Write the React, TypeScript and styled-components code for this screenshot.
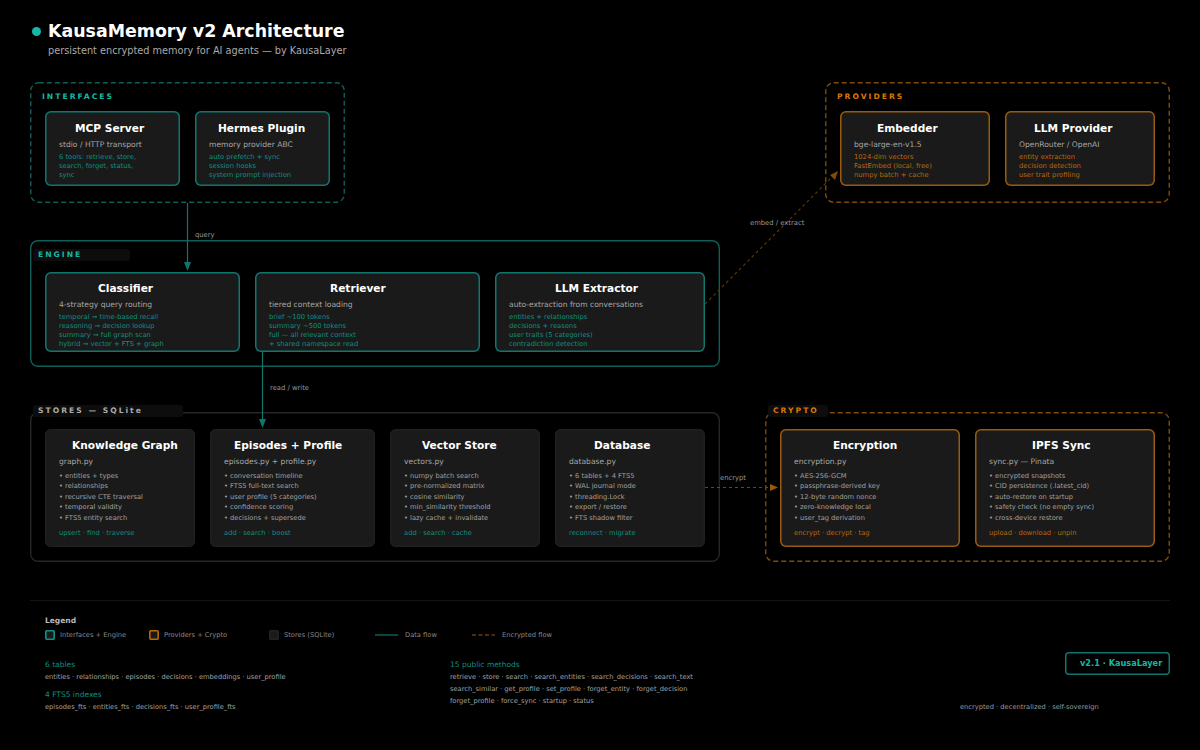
import styled, { createGlobalStyle } from "styled-components";

const TEAL = "#14b8a6";
const TEAL_DIM = "#0f766e";
const TEAL_FRAME = "#0d5f58";
const ORANGE = "#d97706";
const ORANGE_DIM = "#9a5a0e";
const ORANGE_FRAME = "#7f4a0a";

type Tone = "teal" | "orange" | "plain";

const GlobalStyle = createGlobalStyle`
  html, body {
    margin: 0;
    background: #000;
    font-family: "DejaVu Sans", sans-serif;
  }
`;

const Page = styled.div`
  position: relative;
  width: 1200px;
  height: 750px;
  overflow: hidden;
  padding: 0 30px;
  box-sizing: border-box;
  background: #000;
`;

const Header = styled.div`
  height: 82px;
  padding: 19px 0 0 18px;
  box-sizing: border-box;
  position: relative;
`;
const Dot = styled.div`
  position: absolute;
  left: 2px;
  top: 27px;
  width: 9px;
  height: 9px;
  border-radius: 50%;
  background: ${TEAL};
`;
const Title = styled.div`
  font-size: 17.4px;
  line-height: 24px;
  font-weight: 700;
  color: #fff;
`;
const Subtitle = styled.div`
  font-size: 9.75px;
  line-height: 14px;
  margin-top: 1px;
  color: #aaa;
`;

const Row = styled.div<{ $top?: number }>`
  display: flex;
  justify-content: space-between;
  margin-top: ${(p) => p.$top ?? 0}px;
`;

const Group = styled.div<{ $w: number; $h: number; $pad: number; $border?: string }>`
  position: relative;
  width: ${(p) => p.$w}px;
  height: ${(p) => p.$h}px;
  box-sizing: border-box;
  padding: ${(p) => p.$pad}px 15px 0;
  display: flex;
  gap: 15px;
  border-radius: 8px;
  box-shadow: ${(p) => (p.$border ? `inset 0 0 0 1.4px ${p.$border}` : "none")};
`;
const Frame = styled.svg`
  position: absolute;
  left: 0;
  top: 0;
  pointer-events: none;
`;
const GroupLabel = styled.div<{ $tone: Tone; $left: number; $top: number; $chip?: number }>`
  position: absolute;
  left: ${(p) => p.$left}px;
  top: ${(p) => p.$top}px;
  width: ${(p) => (p.$chip ? `${p.$chip}px` : "auto")};
  height: 12px;
  box-sizing: border-box;
  padding-left: 5px;
  border-radius: 3px;
  background: ${(p) => (p.$chip ? "#0d0d0d" : "transparent")};
  font-size: 7.6px;
  line-height: 12px;
  font-weight: 700;
  letter-spacing: 2.02px;
  white-space: nowrap;
  color: ${(p) => (p.$tone === "teal" ? TEAL : p.$tone === "orange" ? ORANGE : "#aaa")};
`;

const Card = styled.div<{ $w: number; $h: number; $tone: Tone; $pt: number }>`
  width: ${(p) => p.$w}px;
  height: ${(p) => p.$h}px;
  flex: none;
  box-sizing: border-box;
  padding: ${(p) => p.$pt}px 0 0 14px;
  background: #1a1a1a;
  border-radius: 6px;
  box-shadow: inset 0 0 0 1.5px
    ${(p) => (p.$tone === "teal" ? TEAL_DIM : p.$tone === "orange" ? ORANGE_DIM : "#1f1f1f")};
`;
const CardTitle = styled.div<{ $indent: number }>`
  margin-left: ${(p) => p.$indent - 14}px;
  font-size: 10.6px;
  line-height: 14px;
  font-weight: 700;
  color: #fff;
  white-space: nowrap;
`;
const CardSub = styled.div`
  margin-top: 4px;
  font-size: 7.6px;
  line-height: 12px;
  color: #a6a6a6;
  white-space: nowrap;
`;
const Details = styled.div<{ $tone: Tone }>`
  margin-top: 2px;
  font-size: 6.75px;
  line-height: 9px;
  white-space: nowrap;
  color: ${(p) => (p.$tone === "teal" ? "#0f8f80" : "#b8690a")};
`;
const Bullets = styled.ul`
  list-style: none;
  margin: 2.75px 0 0;
  padding: 0;
  font-size: 6.7px;
  line-height: 10.5px;
  color: #a0a0a0;
  white-space: nowrap;
`;
const Methods = styled.div<{ $tone: Tone }>`
  margin-top: 4.75px;
  font-size: 6.75px;
  line-height: 10px;
  white-space: nowrap;
  color: ${(p) => (p.$tone === "orange" ? "#b8690a" : "#0f8f80")};
`;

const FlowLabel = styled.text`
  font-family: "DejaVu Sans", sans-serif;
  font-size: 6.8px;
  fill: #999;
`;

const Footer = styled.div`
  margin-top: 38px;
  border-top: 1px solid #141414;
  padding: 14px 0 0 15px;
`;
const LegendTitle = styled.div`
  font-size: 7.5px;
  line-height: 12px;
  font-weight: 700;
  color: #bbb;
`;
const LegendRow = styled.div`
  display: flex;
  margin-top: 2px;
  height: 12px;
`;
const LegendItem = styled.div<{ $w: number }>`
  width: ${(p) => p.$w}px;
  display: flex;
  align-items: center;
  font-size: 6.7px;
  color: #888;
  white-space: nowrap;
`;
const Swatch = styled.span<{ $color: string }>`
  width: 10px;
  height: 10px;
  margin-right: 5px;
  border-radius: 2px;
  background: #1a1a1a;
  box-shadow: inset 0 0 0 1.6px ${(p) => p.$color};
`;
const LegendLine = styled.svg`
  width: 23px;
  height: 2px;
  margin-right: 7px;
`;

const Stats = styled.div`
  display: grid;
  grid-template-columns: 405px 510px 1fr;
  margin-top: 18px;
`;
const StatHead = styled.div<{ $top?: number }>`
  margin-top: ${(p) => p.$top ?? 0}px;
  font-size: 7.5px;
  line-height: 12px;
  color: #0f8f80;
`;
const StatLine = styled.div`
  font-size: 6.7px;
  line-height: 12px;
  color: #a0a0a0;
  white-space: nowrap;
`;
const Side = styled.div`
  display: flex;
  flex-direction: column;
  margin-top: -7px;
`;
const Badge = styled.div`
  align-self: flex-end;
  width: 105px;
  height: 23px;
  box-sizing: border-box;
  padding-left: 15px;
  border-radius: 4px;
  box-shadow: inset 0 0 0 1.5px ${TEAL_DIM};
  font-size: 8.2px;
  line-height: 23px;
  font-weight: 700;
  color: ${TEAL};
  white-space: nowrap;
`;
const SideNote = styled.div`
  margin-top: 26px;
  font-size: 6.7px;
  line-height: 12px;
  color: #999;
  white-space: nowrap;
`;

const Connectors = styled.svg`
  position: absolute;
  left: 0;
  top: 0;
  pointer-events: none;
`;

const DashedFrame = ({ w, h, color }: { w: number; h: number; color: string }) => (
  <Frame width={w} height={h}>
    <rect
      x={0.75}
      y={0.75}
      width={w - 1.5}
      height={h - 1.5}
      rx={8}
      fill="none"
      stroke={color}
      strokeWidth={1.4}
      strokeDasharray="5 3"
    />
  </Frame>
);

type BoxProps = {
  w: number;
  h: number;
  tone: Tone;
  indent: number;
  title: string;
  sub: string;
  lines: string[];
  pt?: number;
};

const SmallBox = ({ w, h, tone, indent, title, sub, lines, pt = 10 }: BoxProps) => (
  <Card $w={w} $h={h} $tone={tone} $pt={pt}>
    <CardTitle $indent={indent}>{title}</CardTitle>
    <CardSub>{sub}</CardSub>
    <Details $tone={tone}>
      {lines.map((l) => (
        <div key={l}>{l}</div>
      ))}
    </Details>
  </Card>
);

const StoreBox = ({ w, h, tone, indent, title, sub, lines, methods }: BoxProps & { methods: string }) => (
  <Card $w={w} $h={h} $tone={tone} $pt={9}>
    <CardTitle $indent={indent}>{title}</CardTitle>
    <CardSub>{sub}</CardSub>
    <Bullets>
      {lines.map((l) => (
        <li key={l}>• {l}</li>
      ))}
    </Bullets>
    <Methods $tone={tone}>{methods}</Methods>
  </Card>
);

export default function App() {
  return (
    <Page>
      <GlobalStyle />
      <Header>
        <Dot />
        <Title>KausaMemory v2 Architecture</Title>
        <Subtitle>persistent encrypted memory for AI agents — by KausaLayer</Subtitle>
      </Header>

      <Row>
        <Group $w={315} $h={121} $pad={29}>
          <DashedFrame w={315} h={121} color={TEAL_FRAME} />
          <GroupLabel $tone="teal" $left={7} $top={9}>INTERFACES</GroupLabel>
          <SmallBox w={135} h={75} tone="teal" indent={30} title="MCP Server" sub="stdio / HTTP transport"
            lines={["6 tools: retrieve, store,", "search, forget, status,", "sync"]} />
          <SmallBox w={135} h={75} tone="teal" indent={23} title="Hermes Plugin" sub="memory provider ABC"
            lines={["auto prefetch + sync", "session hooks", "system prompt injection"]} />
        </Group>
        <Group $w={345} $h={121} $pad={29}>
          <DashedFrame w={345} h={121} color={ORANGE_FRAME} />
          <GroupLabel $tone="orange" $left={7} $top={9}>PROVIDERS</GroupLabel>
          <SmallBox w={150} h={75} tone="orange" indent={37} title="Embedder" sub="bge-large-en-v1.5"
            lines={["1024-dim vectors", "FastEmbed (local, free)", "numpy batch + cache"]} />
          <SmallBox w={150} h={75} tone="orange" indent={29} title="LLM Provider" sub="OpenRouter / OpenAI"
            lines={["entity extraction", "decision detection", "user trait profiling"]} />
        </Group>
      </Row>

      <Row $top={37}>
        <Group $w={690} $h={127} $pad={32} $border={TEAL_FRAME}>
          <GroupLabel $tone="teal" $left={3} $top={9} $chip={97}>ENGINE</GroupLabel>
          <SmallBox w={195} h={80} pt={9} tone="teal" indent={53} title="Classifier" sub="4-strategy query routing"
            lines={["temporal → time-based recall", "reasoning → decision lookup", "summary → full graph scan", "hybrid → vector + FTS + graph"]} />
          <SmallBox w={225} h={80} pt={9} tone="teal" indent={75} title="Retriever" sub="tiered context loading"
            lines={["brief ~100 tokens", "summary ~500 tokens", "full — all relevant context", "+ shared namespace read"]} />
          <SmallBox w={210} h={80} pt={9} tone="teal" indent={60} title="LLM Extractor" sub="auto-extraction from conversations"
            lines={["entities + relationships", "decisions + reasons", "user traits (5 categories)", "contradiction detection"]} />
        </Group>
      </Row>

      <Row $top={45}>
        <Group $w={690} $h={150} $pad={17} $border="#262626">
          <GroupLabel $tone="plain" $left={3} $top={-7} $chip={150}>STORES — SQLite</GroupLabel>
          <StoreBox w={150} h={118} tone="plain" indent={27} title="Knowledge Graph" sub="graph.py"
            lines={["entities + types", "relationships", "recursive CTE traversal", "temporal validity", "FTS5 entity search"]}
            methods="upsert · find · traverse" />
          <StoreBox w={165} h={118} tone="plain" indent={24} title="Episodes + Profile" sub="episodes.py + profile.py"
            lines={["conversation timeline", "FTS5 full-text search", "user profile (5 categories)", "confidence scoring", "decisions + supersede"]}
            methods="add · search · boost" />
          <StoreBox w={150} h={118} tone="plain" indent={32} title="Vector Store" sub="vectors.py"
            lines={["numpy batch search", "pre-normalized matrix", "cosine similarity", "min_similarity threshold", "lazy cache + invalidate"]}
            methods="add · search · cache" />
          <StoreBox w={150} h={118} tone="plain" indent={39} title="Database" sub="database.py"
            lines={["6 tables + 4 FTS5", "WAL journal mode", "threading.Lock", "export / restore", "FTS shadow filter"]}
            methods="reconnect · migrate" />
        </Group>
        <Group $w={405} $h={150} $pad={17}>
          <DashedFrame w={405} h={150} color={ORANGE_FRAME} />
          <GroupLabel $tone="orange" $left={3} $top={-7} $chip={60}>CRYPTO</GroupLabel>
          <StoreBox w={180} h={118} tone="orange" indent={53} title="Encryption" sub="encryption.py"
            lines={["AES-256-GCM", "passphrase-derived key", "12-byte random nonce", "zero-knowledge local", "user_tag derivation"]}
            methods="encrypt · decrypt · tag" />
          <StoreBox w={180} h={118} tone="orange" indent={57} title="IPFS Sync" sub="sync.py — Pinata"
            lines={["encrypted snapshots", "CID persistence (.latest_cid)", "auto-restore on startup", "safety check (no empty sync)", "cross-device restore"]}
            methods="upload · download · unpin" />
        </Group>
      </Row>

      <Footer>
        <LegendTitle>Legend</LegendTitle>
        <LegendRow>
          <LegendItem $w={104}><Swatch $color="#0d9488" />Interfaces + Engine</LegendItem>
          <LegendItem $w={120}><Swatch $color="#b8690a" />Providers + Crypto</LegendItem>
          <LegendItem $w={106}><Swatch $color="#222" />Stores (SQLite)</LegendItem>
          <LegendItem $w={97}>
            <LegendLine><line x1={0} y1={1} x2={23} y2={1} stroke={TEAL_DIM} strokeWidth={1.2} /></LegendLine>
            Data flow
          </LegendItem>
          <LegendItem $w={100}>
            <LegendLine><line x1={0} y1={1} x2={23} y2={1} stroke={ORANGE_DIM} strokeWidth={1.2} strokeDasharray="4 2.5" /></LegendLine>
            Encrypted flow
          </LegendItem>
        </LegendRow>
        <Stats>
          <div>
            <StatHead>6 tables</StatHead>
            <StatLine>entities · relationships · episodes · decisions · embeddings · user_profile</StatLine>
            <StatHead $top={6}>4 FTS5 indexes</StatHead>
            <StatLine>episodes_fts · entities_fts · decisions_fts · user_profile_fts</StatLine>
          </div>
          <div>
            <StatHead>15 public methods</StatHead>
            <StatLine>retrieve · store · search · search_entities · search_decisions · search_text</StatLine>
            <StatLine>search_similar · get_profile · set_profile · forget_entity · forget_decision</StatLine>
            <StatLine>forget_profile · force_sync · startup · status</StatLine>
          </div>
          <Side>
            <Badge>v2.1 · KausaLayer</Badge>
            <SideNote>encrypted · decentralized · self-sovereign</SideNote>
          </Side>
        </Stats>
      </Footer>

      <Connectors width={1200} height={750}>
        <line x1={187.5} y1={203} x2={187.5} y2={262} stroke={TEAL_DIM} strokeWidth={1.2} />
        <polygon points="184,262 191,262 187.5,271" fill={TEAL_DIM} />
        <FlowLabel x={195} y={236.5}>query</FlowLabel>

        <line x1={262.5} y1={352} x2={262.5} y2={419} stroke={TEAL_DIM} strokeWidth={1.2} />
        <polygon points="259,419 266,419 262.5,428" fill={TEAL_DIM} />
        <FlowLabel x={270} y={389.5}>read / write</FlowLabel>

        <line x1={705} y1={304} x2={832} y2={177} stroke="#5f380a" strokeWidth={1.1} strokeDasharray="3 3" />
        <polygon points="830,175 835,180 838,171" fill={ORANGE_FRAME} />
        <FlowLabel x={750} y={224.5}>embed / extract</FlowLabel>

        <line x1={705} y1={487.5} x2={770} y2={487.5} stroke="#74440c" strokeWidth={1.1} strokeDasharray="3 3" />
        <polygon points="770,484 770,491 778,487.5" fill={ORANGE_DIM} />
        <FlowLabel x={720} y={479.5}>encrypt</FlowLabel>
      </Connectors>
    </Page>
  );
}
